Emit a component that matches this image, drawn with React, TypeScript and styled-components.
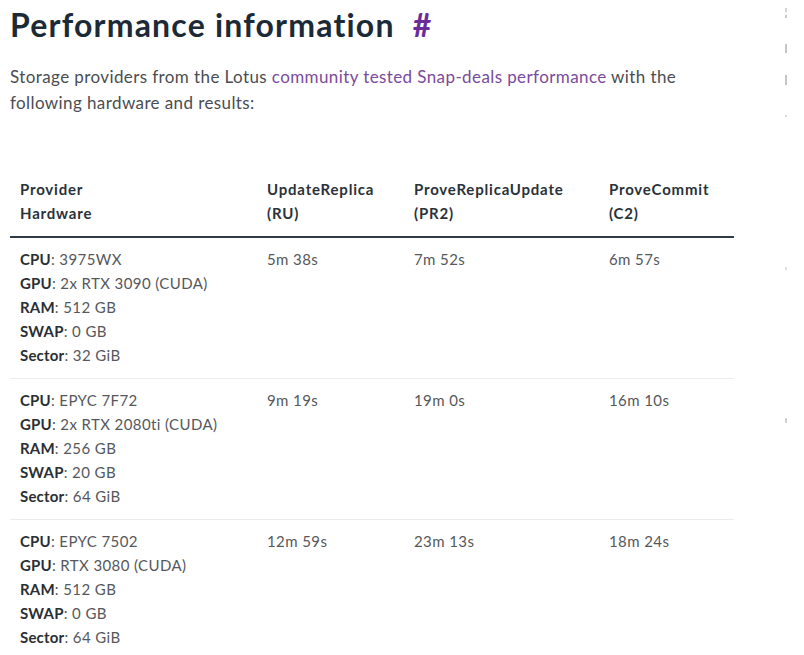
import React from "react";
import styled, { createGlobalStyle } from "styled-components";

const Global = createGlobalStyle`
  html, body { margin: 0; padding: 0; background: #ffffff; }
  body { font-family: Lato, "Noto Sans", sans-serif; -webkit-font-smoothing: antialiased; }
`;

const Page = styled.div`
  display: flex;
  width: 804px;
  height: 655px;
  overflow: hidden;
`;

const Main = styled.main`
  width: 770px;
  flex: none;
  padding: 0 0 0 10px;
  box-sizing: border-box;
`;

const Title = styled.h2`
  margin: 6px 0 0 0;
  font-size: 32px;
  line-height: 38px;
  font-weight: 700;
  color: #1c2a37;
  letter-spacing: 1.2px;
`;

const Anchor = styled.a`
  margin-left: 18px;
  color: #6a2c9a;
  text-decoration: none;
`;

const Para = styled.p`
  margin: 20px 0 0 0;
  font-size: 17px;
  line-height: 26px;
  font-weight: 400;
  color: #4a4d52;
  width: 700px;
  letter-spacing: 0.4px;
`;

const Link = styled.a`
  color: #7a4b9d;
  text-decoration: none;
`;

const Table = styled.table`
  margin-top: 53px;
  width: 724px;
  table-layout: fixed;
  border-collapse: collapse;
  font-size: 15px;
  line-height: 24px;
`;

const Th = styled.th<{ $w: number }>`
  box-sizing: border-box;
  width: ${(p) => p.$w}px;
  text-align: left;
  vertical-align: top;
  padding: 8px 10px 11px 10px;
  font-weight: 700;
  color: #2a323a;
  letter-spacing: 0.8px;
  white-space: nowrap;
  border-bottom: 2px solid #2e3b47;
`;

const Row = styled.tr`
  border-bottom: 1px solid #ececec;
  &:last-child { border-bottom: none; }
`;

const Td = styled.td`
  vertical-align: top;
  padding: 9px 10px 11px 10px;
  color: #55585c;
  letter-spacing: 0.4px;
`;

const Spec = styled.div`
  color: #55585c;
  white-space: nowrap;
`;

const Label = styled.b`
  font-weight: 700;
  color: #2a2f35;
  letter-spacing: 0.2px;
`;

const Side = styled.aside`
  flex: 1;
  display: flex;
  flex-direction: column;
  align-items: flex-start;
  padding: 8px 0 0 15px;
`;

const Mark = styled.span<{ $h: number; $mt: number; $c: string }>`
  display: block;
  width: 2px;
  height: ${(p) => p.$h}px;
  margin-top: ${(p) => p.$mt}px;
  background: ${(p) => p.$c};
`;

type Hw = { cpu: string; gpu: string; ram: string; swap: string; sector: string; ru: string; pr2: string; c2: string };

const rows: Hw[] = [
  { cpu: "3975WX", gpu: "2x RTX 3090 (CUDA)", ram: "512 GB", swap: "0 GB", sector: "32 GiB", ru: "5m 38s", pr2: "7m 52s", c2: "6m 57s" },
  { cpu: "EPYC 7F72", gpu: "2x RTX 2080ti (CUDA)", ram: "256 GB", swap: "20 GB", sector: "64 GiB", ru: "9m 19s", pr2: "19m 0s", c2: "16m 10s" },
  { cpu: "EPYC 7502", gpu: "RTX 3080 (CUDA)", ram: "512 GB", swap: "0 GB", sector: "64 GiB", ru: "12m 59s", pr2: "23m 13s", c2: "18m 24s" },
];

const marks = [
  { h: 4, mt: 0, c: "#d4d4d4" },
  { h: 3, mt: 3, c: "#c8c8c8" },
  { h: 9, mt: 26, c: "#c4c4c4" },
  { h: 10, mt: 22, c: "#c4c4c4" },
  { h: 2, mt: 30, c: "#d8d8d8" },
  { h: 3, mt: 150, c: "#e0e0e0" },
  { h: 5, mt: 148, c: "#d0d0d0" },
];

export default function App() {
  return (
    <>
      <Global />
      <Page>
        <Main>
          <Title>
            Performance information<Anchor href="#">#</Anchor>
          </Title>
          <Para>
            Storage providers from the Lotus <Link href="#">community tested Snap-deals performance</Link> with the following hardware and results:
          </Para>
          <Table>
            <thead>
              <tr>
                <Th $w={247}>Provider<br />Hardware</Th>
                <Th $w={147}>UpdateReplica<br />(RU)</Th>
                <Th $w={195}>ProveReplicaUpdate<br />(PR2)</Th>
                <Th $w={135}>ProveCommit<br />(C2)</Th>
              </tr>
            </thead>
            <tbody>
              {rows.map((r) => (
                <Row key={r.cpu}>
                  <Td>
                    <Spec><Label>CPU</Label>: {r.cpu}</Spec>
                    <Spec><Label>GPU</Label>: {r.gpu}</Spec>
                    <Spec><Label>RAM</Label>: {r.ram}</Spec>
                    <Spec><Label>SWAP</Label>: {r.swap}</Spec>
                    <Spec><Label>Sector</Label>: {r.sector}</Spec>
                  </Td>
                  <Td>{r.ru}</Td>
                  <Td>{r.pr2}</Td>
                  <Td>{r.c2}</Td>
                </Row>
              ))}
            </tbody>
          </Table>
        </Main>
        <Side>
          {marks.map((m, i) => (
            <Mark key={i} $h={m.h} $mt={m.mt} $c={m.c} />
          ))}
        </Side>
      </Page>
    </>
  );
}
